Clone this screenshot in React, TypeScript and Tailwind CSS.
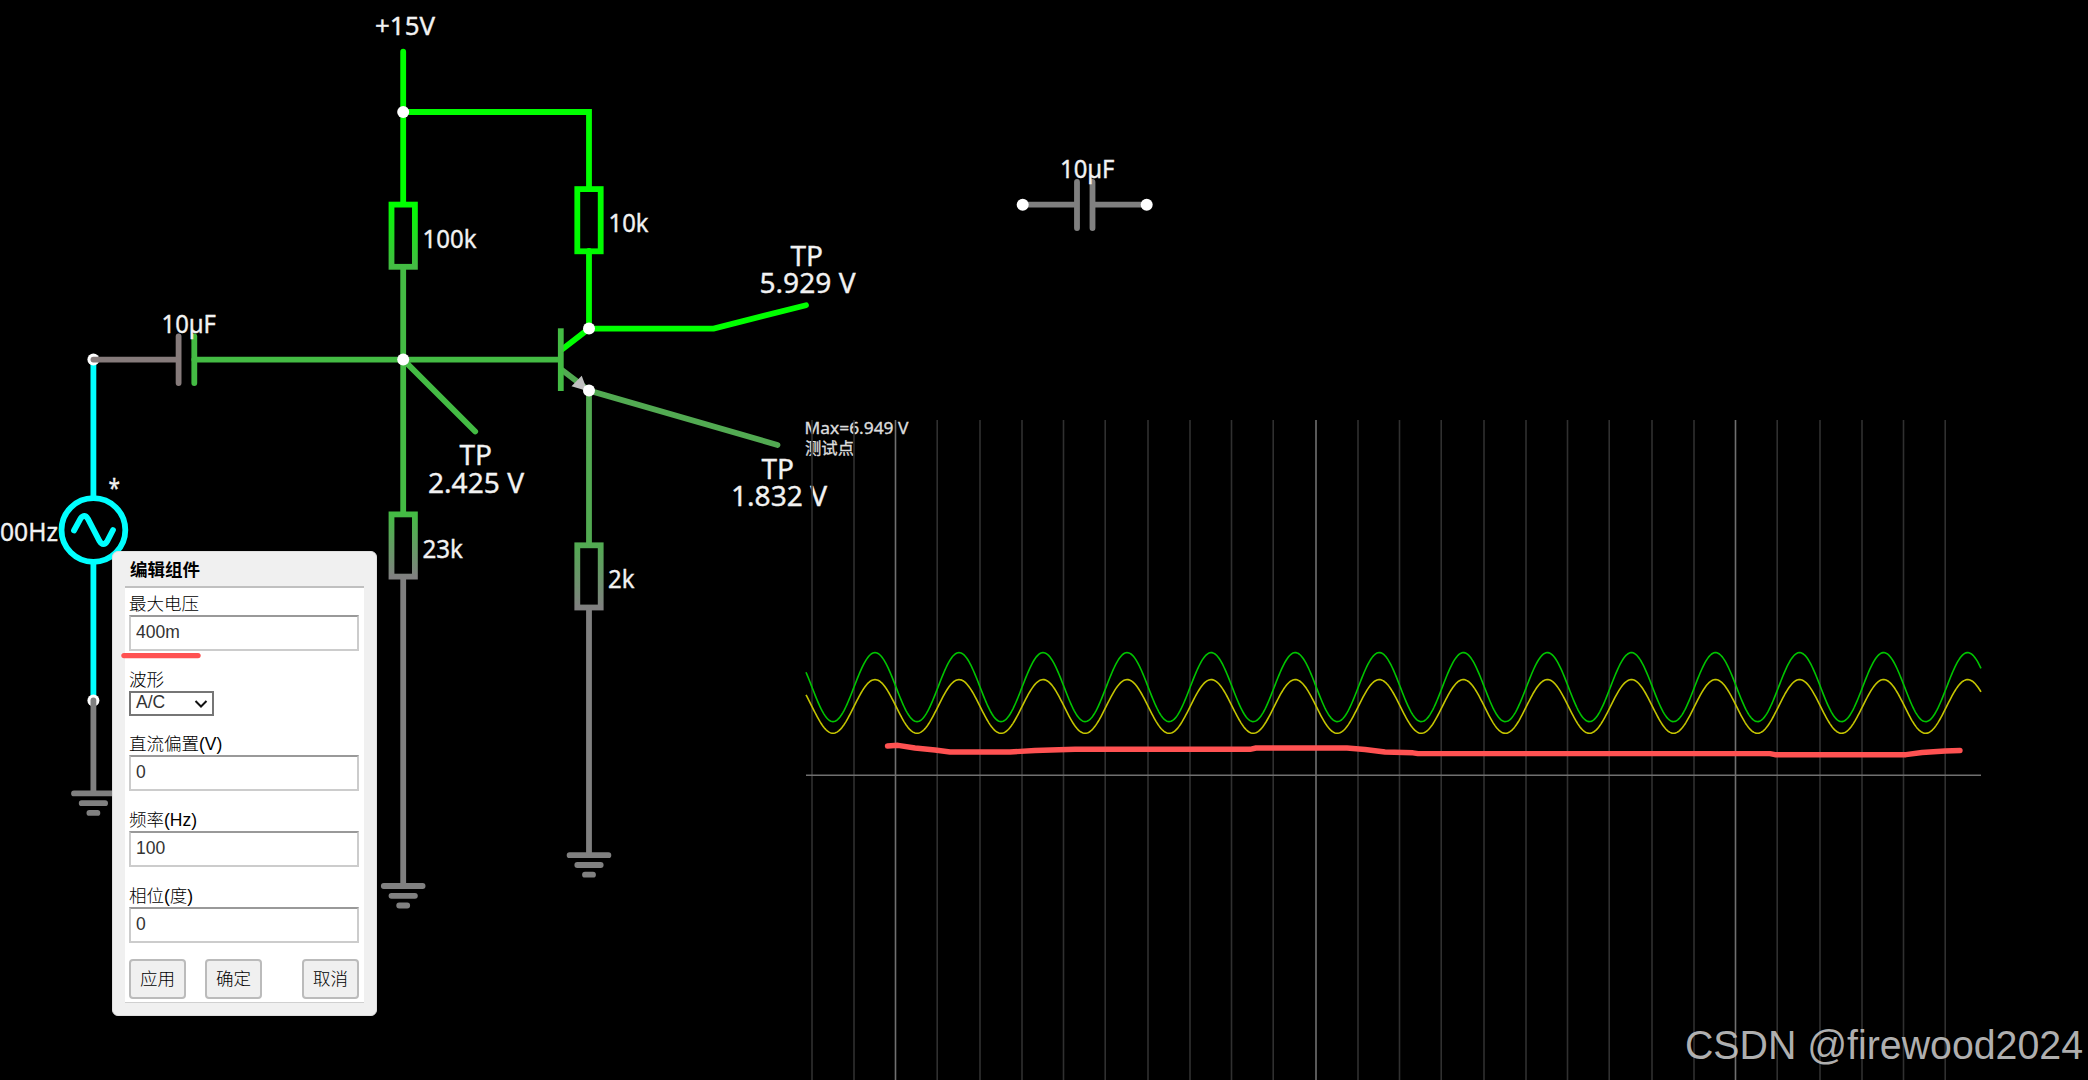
import React, { useState } from "react";

type Field = {
    name: string
    label: string
    value: string
}

type LabelProps = {
    x: number
    y: number
    w: number
    size?: number
    children: string
}

const WIRE = 5.8
const HIGH = "#00ff00"
const BASE = "#44bb44"
const EMIT = "#52aa52"
const GND = "#808080"
const SRC = "#00ffff"

// scope geometry
const LEFT = 806
const RIGHT = 1981
const PERIOD = 84.05
const PEAK_X = 875
const GRID_STEPS = [0, 42, 83.5, 125.2]

const wavePath = (top: number, bottom: number) => {
    const mid = (top + bottom) / 2
    const amp = (bottom - top) / 2
    const points: string[] = []
    for (let x = LEFT; x <= RIGHT; x += 1) {
        const y = mid - amp * Math.cos((2 * Math.PI * (x - PEAK_X)) / PERIOD)
        points.push(`${x},${y.toFixed(2)}`)
    }
    return points.join(" ")
}

const Label = ({ x, y, w, size = 25, children }: LabelProps) => (
    <text
        x={x}
        y={y}
        fontSize={size}
        textLength={w}
        lengthAdjust="spacingAndGlyphs"
        fill="#f2f2f2"
        stroke="#f2f2f2"
        strokeWidth={0.35}
    >
        {children}
    </text>
)

const Resistor = ({ x, y, id, from, to }: { x: number; y: number; id: string; from: string; to: string }) => (
    <g>
        <defs>
            <linearGradient id={id} gradientUnits="userSpaceOnUse" x1={x} y1={y} x2={x} y2={y + 62}>
                <stop offset="0" stopColor={from} />
                <stop offset="1" stopColor={to} />
            </linearGradient>
        </defs>
        <rect x={x - 11.7} y={y} width={23.4} height={62.2} stroke={`url(#${id})`} />
    </g>
)

const Ground = ({ x, y }: { x: number; y: number }) => (
    <path d={`M${x - 19.4} ${y}h38.8M${x - 11.7} ${y + 9.8}h23.4M${x - 4} ${y + 19.5}h8`} stroke={GND} />
)

const Dot = ({ x, y }: { x: number; y: number }) => <circle cx={x} cy={y} r={6} fill="#fff" stroke="none" />

const Circuit = () => (
    <svg className="absolute inset-0 font-['Noto_Sans',sans-serif]" width={2088} height={1080}>
        <g fill="none" strokeWidth={WIRE} strokeLinecap="round">
            {/* supply rail */}
            <path d="M403.2 51.7V204M403.2 112H589V189M589 251V328.6H713.7L806 305.2" stroke={HIGH} />
            {/* base network */}
            <path d="M403.2 267V514M194.3 359.6H560M403.2 359.6L475.2 431.5" stroke={BASE} />
            <path d="M194.3 336.3V383" stroke={BASE} />
            {/* emitter */}
            <path d="M562 370L589 390.6L777.5 445M589 390.6V545" stroke={EMIT} />
            <path d="M562 349.5L589 328.6" stroke={HIGH} />
            <path d="M560.8 328.3V391" stroke={BASE} strokeLinecap="butt" />
            {/* ground legs */}
            <path d="M403.2 577V886M589 608V855" stroke={GND} />
            <Resistor x={403.2} y={204.6} id="r100k" from={HIGH} to={BASE} />
            <Resistor x={589} y={189.1} id="r10k" from={HIGH} to="#00fb00" />
            <Resistor x={403.2} y={514.4} id="r23k" from={BASE} to={GND} />
            <Resistor x={589} y={545.3} id="r2k" from={EMIT} to={GND} />
            <path d="M587.5 391L581.7 375.7L571.5 386.2Z" fill="#c0c0c0" stroke="none" />

            {/* source */}
            <path d="M93.4 359.6V497M93.4 563V700" stroke={SRC} />
            <circle cx={93.4} cy={530} r={31.9} stroke={SRC} />
            <path
                d="M74 530.5L80.5 518.5Q82.5 516 84.3 516Q86.2 516 88 519L99.5 541Q101.3 544 103.3 544Q105.5 544 107 541.5L113 530"
                stroke={SRC}
            />

            <Dot x={403.2} y={112} />
            <Dot x={403.2} y={359.6} />
            <Dot x={589} y={328.6} />
            <Dot x={589} y={390.6} />
            <Dot x={93.4} y={359.6} />
            <Dot x={93.4} y={700.4} />
            <path d="M93.4 359.6H178.6M178.6 336.3V383" stroke="#867b7b" />
            <path d="M93.4 700.4V793" stroke={GND} />
            <Ground x={93.4} y={793.4} />
            <Ground x={403.2} y={886} />
            <Ground x={589} y={855.2} />

            {/* loose capacitor */}
            <path d="M1022.7 204.7H1077M1092.5 204.7H1146.7M1077 182V228M1092.5 182V228" stroke={GND} />
            <Dot x={1022.7} y={204.7} />
            <Dot x={1146.7} y={204.7} />
        </g>

        <Label x={375} y={35} w={60}>+15V</Label>
        <Label x={422.5} y={247.5} w={54}>100k</Label>
        <Label x={608.5} y={232} w={40}>10k</Label>
        <Label x={422.5} y={557.7} w={40.5}>23k</Label>
        <Label x={608} y={588} w={26.5}>2k</Label>
        <Label x={161.5} y={332.5} w={54.5}>10µF</Label>
        <Label x={1060} y={177.7} w={54.5}>10µF</Label>
        <Label x={0} y={541} w={58}>00Hz</Label>
        <Label x={108.5} y={497} w={11.5}>*</Label>
        <Label x={790.5} y={266} w={32.5} size={28}>TP</Label>
        <Label x={759.5} y={292.7} w={96} size={28}>5.929 V</Label>
        <Label x={459.5} y={464.7} w={32.5} size={28}>TP</Label>
        <Label x={428} y={492.7} w={96} size={28}>2.425 V</Label>
        <Label x={761.5} y={479} w={32.5} size={28}>TP</Label>
        <Label x={731} y={506} w={96} size={28}>1.832 V</Label>
    </svg>
)

const Scope = () => {
    const lines = Array.from({ length: 28 }, (_, i) => 812 + Math.floor(i / 4) * 168 + GRID_STEPS[i % 4])
    return (
        <svg className="absolute inset-0 font-['Noto_Sans','Noto_Sans_CJK_SC',sans-serif]" width={2088} height={1080}>
            <g fill="#dcdcdc" stroke="#dcdcdc" strokeWidth={0.35} fontSize={16}>
                <text x={804.5} y={433.5} textLength={104} lengthAdjust="spacingAndGlyphs">Max=6.949 V</text>
                <text x={805} y={454} textLength={49} lengthAdjust="spacingAndGlyphs">测试点</text>
            </g>
            {lines.map((x, i) => (
                <path key={x} d={`M${x} 420V1080`} stroke={i % 10 === 2 ? "#707070" : "#303030"} strokeWidth={1.6} />
            ))}
            <path d={`M${LEFT} 775.3H${RIGHT}`} stroke="#707070" strokeWidth={1.6} />
            <polyline points={wavePath(679.6, 733.3)} fill="none" stroke="#c4c400" strokeWidth={1.6} />
            <polyline points={wavePath(652.6, 721.6)} fill="none" stroke="#00c400" strokeWidth={1.6} />
        </svg>
    )
}

const EditDialog = () => {
    const [fields, setFields] = useState<Field[]>([
        { name: "maxVoltage", label: "最大电压", value: "400m" },
        { name: "waveform", label: "波形", value: "A/C" },
        { name: "offset", label: "直流偏置(V)", value: "0" },
        { name: "frequency", label: "频率(Hz)", value: "100" },
        { name: "phase", label: "相位(度)", value: "0" },
    ])

    const update = (name: string, value: string) => {
        setFields(fields.map((f) => (f.name === name ? { ...f, value } : f)))
    }

    return (
        <div className="absolute left-[112px] top-[551px] w-[265px] h-[465px] rounded-md bg-[#f0f0f0] px-[12px] border border-[#e0e0e0] font-['Liberation_Sans','Noto_Sans_CJK_SC',sans-serif] text-[17.5px] text-[#333]">
            <h2 className="h-[34px] pl-[5px] pt-[4px] leading-[28px] font-bold text-black">编辑组件</h2>
            <div className="h-[417px] border-t-2 border-b border-t-[#c0c0c0] border-b-[#d0d0d0] bg-white pl-[4px] pr-[5px] pt-[4px]">
                {fields.map((field) => (
                    <div key={field.name} className={field.name === "waveform" ? "h-[64px]" : "h-[76px]"}>
                        <label className="block h-[23px] leading-[25px] font-light text-black">{field.label}</label>
                        {field.name === "waveform" ? (
                            <button className="flex items-center justify-between w-[85px] h-[25px] border-2 border-[#767676] pl-[5px] pr-[4px] pb-[1px] leading-none">
                                {field.value}
                                <svg width={14} height={10} viewBox="0 0 14 10" className="mt-[2px]">
                                    <path d="M1.5 2L7 7.5L12.5 2" fill="none" stroke="#111" strokeWidth={2} />
                                </svg>
                            </button>
                        ) : (
                            <input
                                value={field.value}
                                onChange={(e) => update(field.name, e.target.value)}
                                className="block w-[230px] h-[36px] border-2 border-[#ccc] border-t-[#999] bg-white pl-[5px] pb-[1px] outline-none"
                            />
                        )}
                    </div>
                ))}
                {/* Buttons */}
                <div className="flex w-[230px] -mt-px font-light text-black">
                    <button className="w-[57px] h-[40px] rounded border-2 border-[#bbb] bg-[#f0f0f0]">应用</button>
                    <button className="ml-[19px] w-[57px] h-[40px] rounded border-2 border-[#bbb] bg-[#f0f0f0]">确定</button>
                    <button className="ml-auto w-[57px] h-[40px] rounded border-2 border-[#bbb] bg-[#f0f0f0]">取消</button>
                </div>
            </div>
        </div>
    )
}

// hand-drawn marks and the signature sit above everything else
const Annotations = () => (
    <svg className="pointer-events-none absolute inset-0 font-['Liberation_Sans',sans-serif]" width={2088} height={1080}>
        <g fill="none" stroke="#ff5252" strokeWidth={5.4} strokeLinecap="round" strokeLinejoin="round">
            <path d="M124 655.6H198" />
            <path d="M887.5 746L898 745.3L915 748L935 750L950 752H1010L1035 750.5L1075 749.3H1250L1256 748H1347L1365 749.5L1385 752L1413 752.8L1418 753.6H1770L1775 754.7H1906L1922 752.5L1945 751L1960 750.5" />
        </g>
        <text x={1685} y={1058.7} fontSize={40} fill="#c8c8c8" fillOpacity={0.88} textLength={398} lengthAdjust="spacingAndGlyphs">
            CSDN @firewood2024
        </text>
    </svg>
)

const App = () => {
    return (
        <div className="relative w-[2088px] h-[1080px] overflow-hidden bg-black">
            <Circuit />
            <Scope />
            <EditDialog />
            <Annotations />
        </div>
    )
}

export default App;
